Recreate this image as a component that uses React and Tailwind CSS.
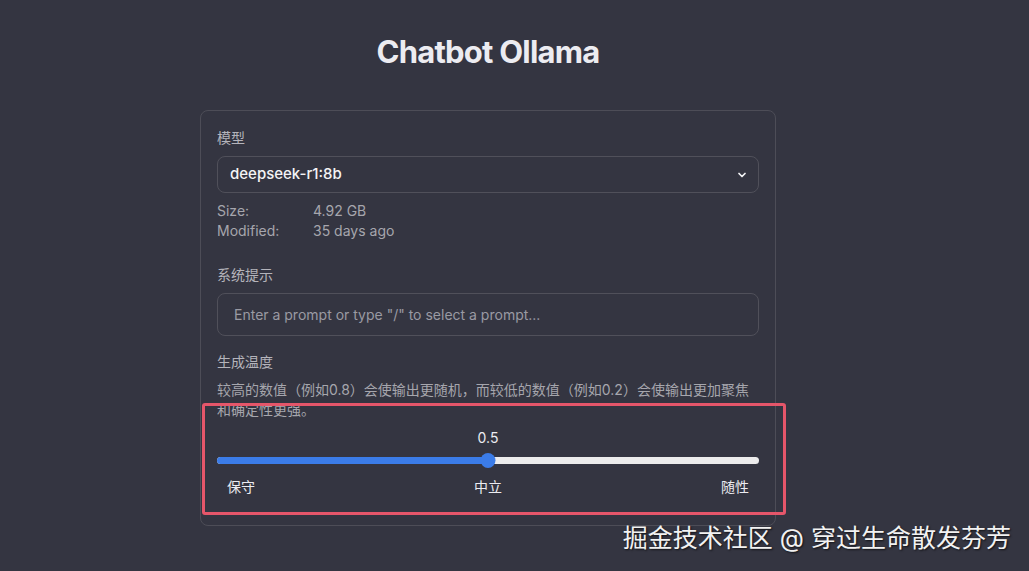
import React from 'react';

const font = { fontFamily: 'Inter, "Noto Sans CJK SC", sans-serif' };

export default function App() {
  return (
    <div className="relative min-h-[571px] w-full bg-[#343541] text-white font-['Inter','Noto_Sans_CJK_SC',sans-serif]">
      <div className="flex flex-col items-center pt-[32px] pr-[53px]">
        <h1 className="text-[31px] leading-[40px] font-bold text-[#ececf1] tracking-tight">Chatbot Ollama</h1>

        <div className="relative mt-[38px] w-[576px] rounded-lg border border-[#4d4d57] px-[16px] pt-[17px] pb-[10px]">
          <div className="text-sm leading-5 text-[#b4b4bb]">模型</div>
          <div className="mt-[8px] flex h-[37px] items-center justify-between rounded-lg border border-[#50505a] pl-[12px] pr-[10px]">
            <span className="text-[15px] font-medium text-[#f4f4f6]">deepseek-r1:8b</span>
            <svg width="12" height="12" viewBox="0 0 24 24" fill="none" stroke="#f4f4f6" strokeWidth="3.5" strokeLinecap="round" strokeLinejoin="round">
              <path d="M6 9l6 6 6-6" />
            </svg>
          </div>
          <div className="mt-[8px] text-sm leading-5 text-[#a6a6ad]">
            <div className="flex"><span className="w-[96px]">Size:</span><span>4.92 GB</span></div>
            <div className="flex"><span className="w-[96px]">Modified:</span><span>35 days ago</span></div>
          </div>

          <div className="mt-[24px] text-sm leading-5 text-[#b4b4bb]">系统提示</div>
          <div className="mt-[8px] flex h-[43px] items-center rounded-lg border border-[#50505a] px-[16px] text-sm text-[#9a9aa3]">
            Enter a prompt or type "/" to select a prompt...
          </div>

          <div className="mt-[16px] text-sm leading-5 text-[#b4b4bb]">生成温度</div>
          <div className="mt-[8px] text-sm leading-5 text-[#a6a6ad] pr-[6px]">
            较高的数值（例如0.8）会使输出更随机，而较低的数值（例如0.2）会使输出更加聚焦和确定性更强。
          </div>

          <div className="mt-[8px] text-center text-sm leading-5 text-[#ececf1]">0.5</div>
          <div className="relative mt-[5px] h-[15px] flex items-center">
            <div className="h-[7px] w-full rounded-full bg-[#ececec]">
              <div className="h-full w-1/2 rounded-full bg-[#3b7ce8]" />
            </div>
            <div className="absolute left-1/2 top-0 h-[15px] w-[15px] -translate-x-1/2 rounded-full bg-[#3b7ce8]" />
          </div>
          <div className="mt-[9px] flex justify-between px-[10px] text-sm leading-5 text-[#ececf1]">
            <span>保守</span>
            <span>中立</span>
            <span>随性</span>
          </div>
          <div className="h-[18px]" />

          <div className="pointer-events-none absolute left-[1px] top-[292px] h-[112px] w-[584px] rounded-[3px] border-[3px] border-[#e5566a]" />
        </div>
      </div>

      <div
        className="absolute right-[18px] bottom-[18px] text-[25px] leading-[30px] text-[#f2f2f2] [text-shadow:1px_1px_2px_rgba(0,0,0,0.7)]"
        style={font}
      >
        掘金技术社区 @ 穿过生命散发芬芳
      </div>
    </div>
  );
}
